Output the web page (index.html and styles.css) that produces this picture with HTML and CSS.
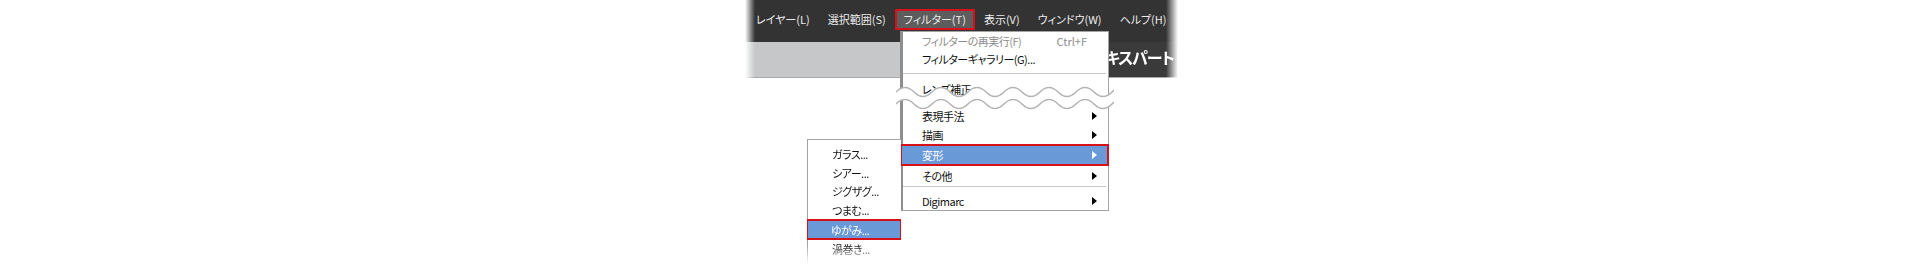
FILE: index.html
```html
<!DOCTYPE html>
<html lang="ja">
<head>
    <meta charset="UTF-8">
    <title>フィルター &gt; 変形 &gt; ゆがみ</title>
    <link rel="stylesheet" href="styles.css">
</head>
<body>
    <div class="screen">
        <div class="chrome">
            <div class="menubar">
                <span class="mb_item">レイヤー(L)</span>
                <span class="mb_item">選択範囲(S)</span>
                <span class="mb_item open">フィルター(T)</span>
                <span class="mb_item">表示(V)</span>
                <span class="mb_item">ウィンドウ(W)</span>
                <span class="mb_item">ヘルプ(H)</span>
            </div>
            <div class="toolbar">
                <div class="tb_gray"></div>
                <div class="tb_dark">エキスパート</div>
            </div>
        </div>

        <!-- フィルターメニュー -->
        <ul class="menu main_menu">
            <li class="mi disabled"><span>フィルターの再実行(F)</span><span class="shortcut">Ctrl+F</span></li>
            <li class="mi">フィルターギャラリー(G)...</li>
            <li class="sep"></li>
            <li class="mi lens">レンズ補正...</li>
            <li class="gap"></li>
            <li class="mi sub">表現手法<i class="arrow"></i></li>
            <li class="mi sub tall">描画<i class="arrow"></i></li>
            <li class="mi sub active">変形<i class="arrow"></i></li>
            <li class="mi sub tall">その他<i class="arrow"></i></li>
            <li class="sep sep2"></li>
            <li class="mi sub last">Digimarc<i class="arrow"></i></li>
        </ul>

        <!-- 省略部分の波線 -->
        <svg class="cut" width="218" height="28" viewBox="0 0 218 28">
            <path d="M0,7 q9,-9 18,0 t18,0 t18,0 t18,0 t18,0 t18,0 t18,0 t18,0 t18,0 t18,0 t18,0 t18,0 t18,0 t18,0
                     L252,19 q-9,9 -18,0 t-18,0 t-18,0 t-18,0 t-18,0 t-18,0 t-18,0 t-18,0 t-18,0 t-18,0 t-18,0 t-18,0 t-18,0 t-18,0 Z"
                  fill="#fff" stroke="none"/>
            <path d="M0,7 q9,-9 18,0 t18,0 t18,0 t18,0 t18,0 t18,0 t18,0 t18,0 t18,0 t18,0 t18,0 t18,0 t18,0 t18,0"
                  fill="none" stroke="#b4b4b4" stroke-width="1.6"/>
            <path d="M0,19 q9,-9 18,0 t18,0 t18,0 t18,0 t18,0 t18,0 t18,0 t18,0 t18,0 t18,0 t18,0 t18,0 t18,0 t18,0"
                  fill="none" stroke="#b4b4b4" stroke-width="1.6"/>
        </svg>

        <!-- 変形サブメニュー -->
        <ul class="menu sub_menu">
            <li class="mi">ガラス...</li>
            <li class="mi">シアー...</li>
            <li class="mi">ジグザグ...</li>
            <li class="mi">つまむ...</li>
            <li class="mi active">ゆがみ...</li>
            <li class="mi">渦巻き...</li>
        </ul>
    </div>
</body>
</html>
```

FILE: styles.css
```css
body { margin:0; background:#fff; font-family:"Noto Sans CJK JP", "Liberation Sans", sans-serif; font-size:11px; font-feature-settings:"palt"; }
ul { list-style:none; margin:0; padding:0; }

.screen { position:relative; width:433px; height:264px; margin-left:745px; }

/* 上のメニューバーとツールバー */
.chrome { -webkit-mask-image:linear-gradient(to right, transparent 0, #000 10px, #000 calc(100% - 12px), transparent 100%);
          mask-image:linear-gradient(to right, transparent 0, #000 10px, #000 calc(100% - 12px), transparent 100%); }
.menubar { display:flex; align-items:flex-start; height:42px; padding-left:2px; background:#333; color:#ececec; }
.mb_item { margin-top:9px; height:17px; line-height:17px; padding:0 7px; border:2px solid transparent; white-space:nowrap; }
.mb_item.open { border-color:#d8101a; background:#5d5d5d; }
.toolbar { display:flex; height:35px; border-bottom:1px solid #a8a8a8; }
.tb_gray { flex:1; background:#c5c7c9; }
.tb_dark { width:110px; background:#3a3a3a; color:#fff; font-size:16px; font-weight:bold; letter-spacing:-1px;
           text-align:right; padding:3px 4px 0 0; box-sizing:border-box; white-space:nowrap; overflow:hidden; }

/* ドロップダウン */
.menu { position:absolute; background:#fff; color:#111; box-sizing:border-box; letter-spacing:-0.5px; }
.mi { display:flex; align-items:center; justify-content:space-between; height:18px; white-space:nowrap; }
.mi.disabled { color:#8d8d8d; }
.shortcut { margin-right:10px; letter-spacing:0; }
.sep { height:1px; background:#c8c8c8; margin:5px 2px 4px 0; }
.gap { height:9px; }

.main_menu { left:155px; top:31px; width:209px; height:180px; border:1px solid #a3a3a3; border-left:3px solid #8e8e8e; z-index:1; }
.main_menu .mi { padding:0 11px 0 19px; }
.main_menu .mi.lens { padding-top:2px; }
.main_menu .mi.tall { height:19px; }
.main_menu .mi.last { height:20px; }
.main_menu .mi.active { height:22px; margin:0 -1px 0 -3px; padding:0 10px 0 20px; border:2px solid #d8101a; box-sizing:border-box; }
.main_menu .sep2 { margin:1px 2px 4px 0; }

.mi.active { background:#6a99d8; color:#fff; }
.arrow { width:0; height:0; border-left:5px solid #000; border-top:4px solid transparent; border-bottom:4px solid transparent; }
.mi.active .arrow { border-left-color:#fff; }

.cut { position:absolute; left:151px; top:85px; z-index:2; }

.sub_menu { left:62px; top:139px; width:94px; height:125px; padding-top:5px; border-left:1px solid #a3a3a3; border-top:1px solid #a3a3a3; z-index:3;
            -webkit-mask-image:linear-gradient(to bottom, #000 85%, transparent 100%);
            mask-image:linear-gradient(to bottom, #000 85%, transparent 100%); }
.sub_menu .mi { height:18.5px; padding-left:24px; }
.sub_menu .mi.active { height:21px; margin:0 -1px 0 -2px; padding-left:23px; border:2px solid #d8101a; box-sizing:border-box; }
```
